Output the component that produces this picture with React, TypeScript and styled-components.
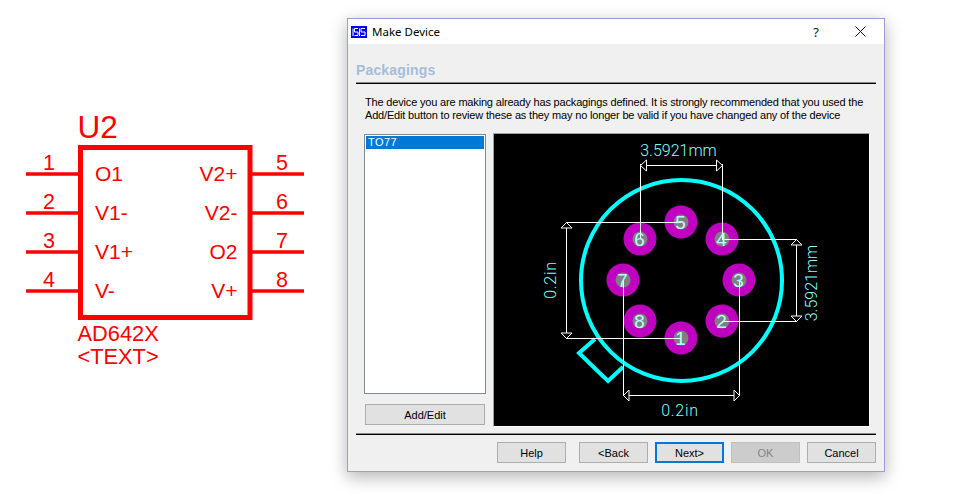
import React from "react";
import styled, { createGlobalStyle } from "styled-components";

const Global = createGlobalStyle`
  html, body { margin: 0; padding: 0; background: #fff; }
  body { font-family: "Liberation Sans", Arial, sans-serif; }
`;

const Stage = styled.div`
  width: 962px;
  height: 498px;
  display: flex;
  align-items: flex-start;
  overflow: hidden;
  background: #fff;
`;

const Schematic = styled.svg`
  width: 320px;
  height: 498px;
  flex: none;
  display: block;
`;

const SchText = styled.text`
  font-family: "Liberation Sans", Arial, sans-serif;
  fill: #ff0000;
`;

const Dialog = styled.div`
  width: 538px;
  height: 454px;
  box-sizing: border-box;
  margin: 18px 0 0 27px;
  flex: none;
  display: flex;
  flex-direction: column;
  background: #f0f0f0;
  border: 1px solid #9c9cdc;
  box-shadow: 0 5px 16px rgba(0, 0, 0, 0.3);
`;

const TitleBar = styled.div`
  height: 25px;
  flex: none;
  display: flex;
  align-items: center;
  background: #fff;
  padding: 0 18px 0 3px;
`;

const TitleText = styled.span`
  font: 11.5px "Noto Sans", "Open Sans", sans-serif;
  color: #000;
  margin-left: 5px;
  flex: 1;
`;

const HelpMark = styled.span`
  font: 13px "Noto Sans", sans-serif;
  color: #111;
  margin-right: 36px;
`;

const Body = styled.div`
  flex: 1;
  display: flex;
  flex-direction: column;
  padding: 0 8px;
`;

const Heading = styled.div`
  height: 38px;
  padding-top: 16px;
  box-sizing: border-box;
  font: bold 14px/20px "Liberation Sans", Arial, sans-serif;
  letter-spacing: 0.15px;
  color: #a6bcd9;
  flex: none;
`;

const Rule = styled.div`
  height: 2px;
  box-sizing: border-box;
  flex: none;
  border-top: 1px solid #8a8a8a;
  border-bottom: 1px solid #000;
`;

const Intro = styled.p`
  margin: 12px 0 11px 9px;
  font: 11px/13px "Liberation Sans", Arial, sans-serif;
  letter-spacing: -0.17px;
  color: #000;
  white-space: nowrap;
`;

const Content = styled.div`
  display: flex;
  gap: 7px;
  margin-left: 8px;
  height: 294px;
  flex: none;
`;

const LeftColumn = styled.div`
  width: 122px;
  display: flex;
  flex-direction: column;
  padding-top: 1px;
  align-items: center;
`;

const List = styled.div`
  width: 122px;
  height: 260px;
  box-sizing: border-box;
  border: 1px solid #828790;
  background: #fff;
  padding: 1px;
  margin-bottom: 10px;
`;

const ListItem = styled.div<{ $selected?: boolean }>`
  height: 13px;
  padding-left: 2px;
  font: 11px/13px "Liberation Sans", Arial, sans-serif;
  letter-spacing: 0.4px;
  color: ${(p) => (p.$selected ? "#fff" : "#000")};
  background: ${(p) => (p.$selected ? "#0078d7" : "transparent")};
`;

const Button = styled.button<{ $wide?: boolean; $primary?: boolean }>`
  width: ${(p) => (p.$wide ? "120px" : "69px")};
  height: 21px;
  box-sizing: border-box;
  padding: 0;
  flex: none;
  font: 11px "Liberation Sans", Arial, sans-serif;
  color: #000;
  background: #e1e1e1;
  border: ${(p) => (p.$primary ? "2px solid #0078d7" : "1px solid #adadad")};
  &:disabled {
    background: #cccccc;
    border-color: #bfbfbf;
    color: #838383;
  }
`;

const Preview = styled.div`
  width: 377px;
  height: 294px;
  box-sizing: border-box;
  border-style: solid;
  border-width: 1px;
  border-color: #a0a0a0 #ffffff #ffffff #a0a0a0;
  background: #000;
  flex: none;
`;

const PreviewSvg = styled.svg`
  display: block;
  width: 375px;
  height: 292px;
`;

const DimText = styled.text<{ $spaced?: boolean }>`
  font-family: Roboto, "Liberation Sans", sans-serif;
  font-weight: 300;
  font-size: 16px;
  letter-spacing: ${(p) => (p.$spaced ? "0.7px" : "0")};
  fill: #80ffff;
`;

const PadNum = styled.text`
  font-family: "Liberation Sans", sans-serif;
  font-size: 19px;
  fill: #b0ffff;
`;

const BottomRule = styled(Rule)`
  margin-top: 6px;
`;

const Footer = styled.div`
  display: flex;
  justify-content: flex-end;
  gap: 7px;
  margin-top: 7px;
`;

const HelpButton = styled(Button)`
  margin-right: 6px;
`;

const leftPins = [
  { n: "1", name: "O1", y: 174 },
  { n: "2", name: "V1-", y: 213 },
  { n: "3", name: "V1+", y: 252 },
  { n: "4", name: "V-", y: 291 },
];
const rightPins = [
  { n: "5", name: "V2+", y: 174 },
  { n: "6", name: "V2-", y: 213 },
  { n: "7", name: "O2", y: 252 },
  { n: "8", name: "V+", y: 291 },
];

const pads = [
  { n: "5", x: 681, y: 222 },
  { n: "6", x: 640, y: 239 },
  { n: "4", x: 722, y: 239 },
  { n: "7", x: 623, y: 280 },
  { n: "3", x: 739, y: 280 },
  { n: "8", x: 640, y: 321 },
  { n: "2", x: 722, y: 321 },
  { n: "1", x: 681, y: 338 },
];

const dimLines = [
  "M640.5 164V239M722.5 164V239M640 165.5H723",
  "M566 222.5H681M566 338.5H681M566.5 222V339",
  "M722 239.5H797M722 321.5H797M796.5 239V322",
  "M623.5 280V396M739.5 280V396M623 395.5H740",
];
const arrows = [
  "M640.5 165.5L646.5 160V171Z",
  "M722.5 165.5L716.5 160V171Z",
  "M566.5 222.5L561 228H572Z",
  "M566.5 338.5L561 333H572Z",
  "M796.5 239.5L791 245H802Z",
  "M796.5 321.5L791 316H802Z",
  "M623.5 395.5L629 390V401Z",
  "M739.5 395.5L734 390V401Z",
];

export default function App() {
  return (
    <Stage>
      <Global />
      <Schematic viewBox="0 0 320 498">
        <rect x="80.5" y="147.5" width="169.5" height="170" fill="none" stroke="#f00" strokeWidth="5" />
        <SchText x="77.5" y="138" fontSize="31.5">U2</SchText>
        {leftPins.map((p) => (
          <g key={p.n}>
            <line x1="26" x2="79" y1={p.y} y2={p.y} stroke="#f00" strokeWidth="3.6" />
            <SchText x="49" y={p.y - 4} fontSize="21.5" textAnchor="middle">{p.n}</SchText>
            <SchText x="95" y={p.y + 7} fontSize="21">{p.name}</SchText>
          </g>
        ))}
        {rightPins.map((p) => (
          <g key={p.n}>
            <line x1="251" x2="304" y1={p.y} y2={p.y} stroke="#f00" strokeWidth="3.6" />
            <SchText x="282" y={p.y - 4} fontSize="21.5" textAnchor="middle">{p.n}</SchText>
            <SchText x="237.5" y={p.y + 7} fontSize="21" textAnchor="end">{p.name}</SchText>
          </g>
        ))}
        <SchText x="77.5" y="341" fontSize="21.8">AD642X</SchText>
        <SchText x="77.5" y="364" fontSize="21.8">&lt;TEXT&gt;</SchText>
      </Schematic>

      <Dialog>
        <TitleBar>
          <svg width="16" height="12" viewBox="0 0 16 12">
            <rect width="16" height="12" fill="#0000f0" />
            <path
              d="M2 2.5V10M3.5 2.5H7M3.5 2.5V6H7V9.5H3.5M8.5 2.5V10M10 2.5H14M10 2.5V6H14V9.5H10"
              stroke="#fff"
              strokeWidth="1"
              fill="none"
            />
          </svg>
          <TitleText>Make Device</TitleText>
          <HelpMark>?</HelpMark>
          <svg width="11" height="11" viewBox="0 0 11 11">
            <path d="M0.5 0.5L10.5 10.5M10.5 0.5L0.5 10.5" stroke="#111" strokeWidth="1" />
          </svg>
        </TitleBar>
        <Body>
          <Heading>Packagings</Heading>
          <Rule />
          <Intro>
            The device you are making already has packagings defined. It is strongly recommended that you used the
            <br />
            Add/Edit button to review these as they may no longer be valid if you have changed any of the device
          </Intro>
          <Content>
            <LeftColumn>
              <List>
                <ListItem $selected>TO77</ListItem>
              </List>
              <Button $wide>Add/Edit</Button>
            </LeftColumn>
            <Preview>
              <PreviewSvg viewBox="494 134 375 292">
                <circle cx="681.5" cy="280.5" r="100.5" fill="none" stroke="#00ffff" strokeWidth="4" />
                <path d="M595 339L579 353L608 381L623 367" fill="none" stroke="#00ffff" strokeWidth="4" />
                {pads.map((p) => (
                  <g key={p.n}>
                    <circle cx={p.x} cy={p.y} r="16.5" fill="#c000c0" />
                    <circle cx={p.x} cy={p.y} r="7.5" fill="#808080" />
                  </g>
                ))}
                {dimLines.map((d) => (
                  <path key={d} d={d} fill="none" stroke="#fff" strokeWidth="1" shapeRendering="crispEdges" />
                ))}
                {arrows.map((d) => (
                  <path key={d} d={d} fill="#000" stroke="#fff" strokeWidth="1" />
                ))}
                {pads.map((p) => (
                  <PadNum key={p.n} x={p.x - 0.5} y={p.y + 7} textAnchor="middle">{p.n}</PadNum>
                ))}
                <DimText x="678.5" y="156" textAnchor="middle">3.5921mm</DimText>
                <DimText $spaced x="680" y="416" textAnchor="middle">0.2in</DimText>
                <DimText $spaced transform="translate(556 280) rotate(-90)" textAnchor="middle">0.2in</DimText>
                <DimText transform="translate(817 283) rotate(-90)" textAnchor="middle">3.5921mm</DimText>
              </PreviewSvg>
            </Preview>
          </Content>
          <BottomRule />
          <Footer>
            <HelpButton>Help</HelpButton>
            <Button>&lt;Back</Button>
            <Button $primary>Next&gt;</Button>
            <Button disabled>OK</Button>
            <Button>Cancel</Button>
          </Footer>
        </Body>
      </Dialog>
    </Stage>
  );
}
